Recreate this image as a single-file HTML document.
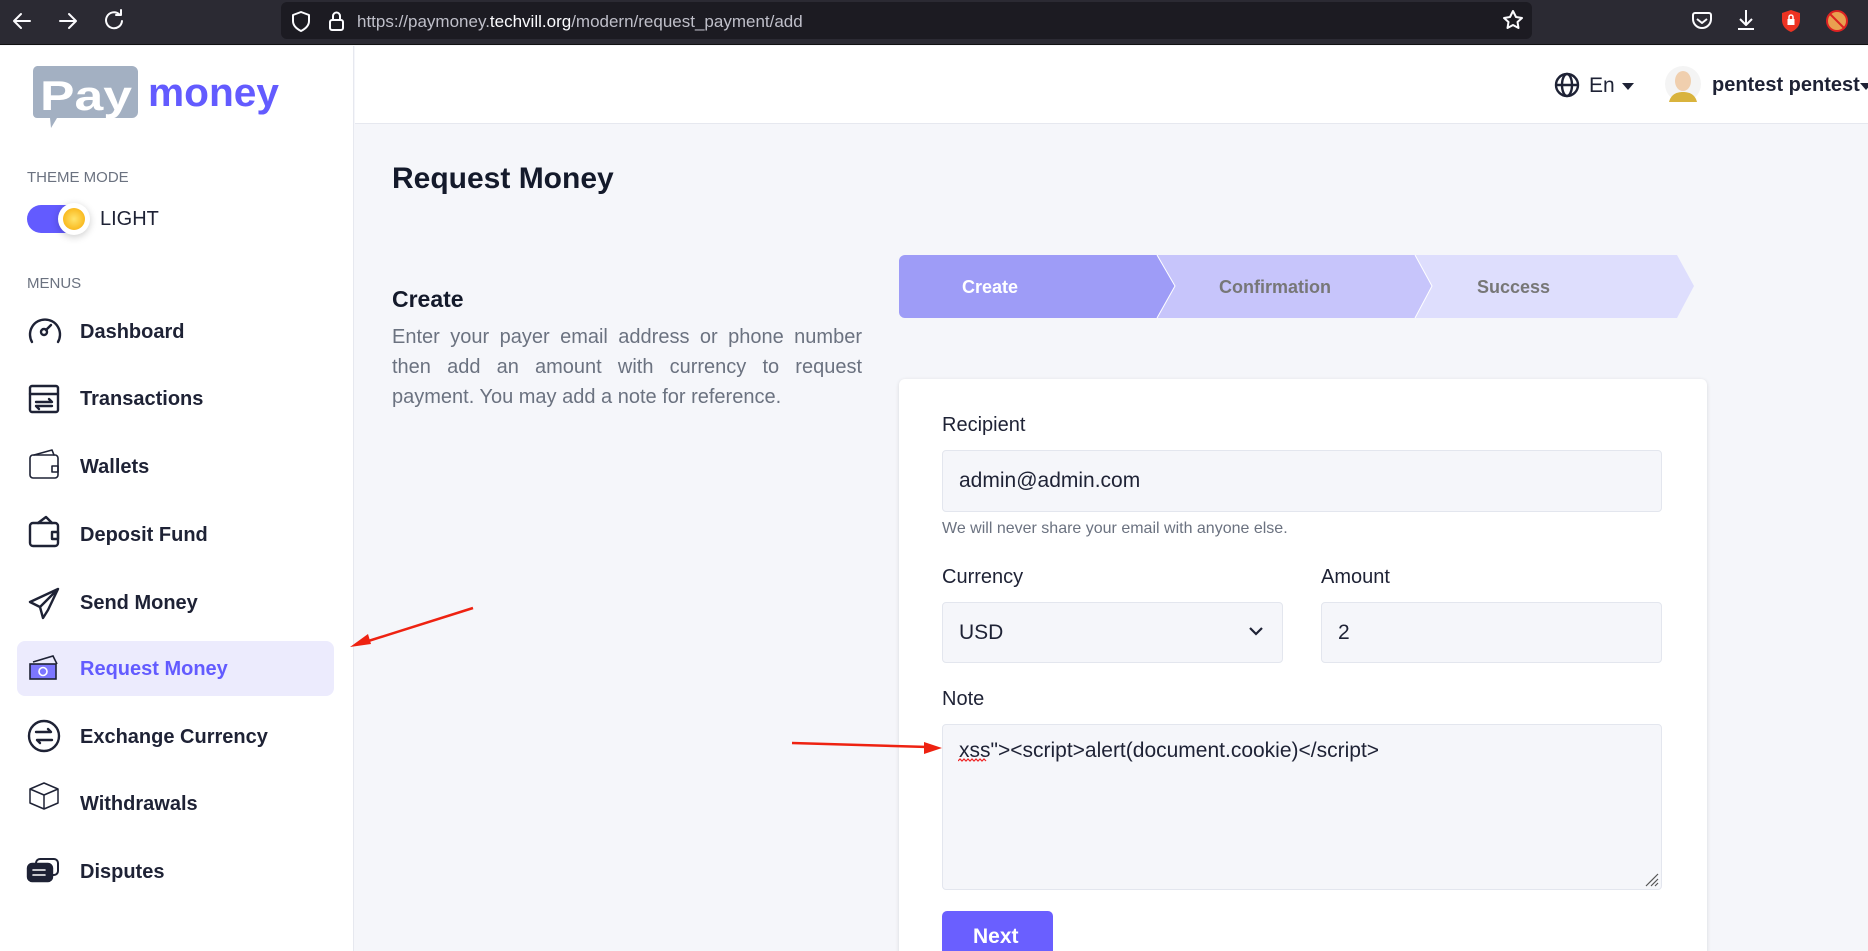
<!DOCTYPE html>
<html style="overflow:hidden;height:951px"><head><meta charset="utf-8"><style>
*{box-sizing:border-box;margin:0;padding:0}
body{width:1868px;height:951px;overflow:hidden;background:#f5f6fa;font-family:"Liberation Sans",sans-serif;position:relative;color:#1c1c2e}
.abs{position:absolute}
#bar{left:0;top:0;width:1868px;height:45px;background:#2b2a33;border-bottom:1px solid #111}
#url{left:281px;top:2px;width:1251px;height:37px;background:#1c1b22;border-radius:6px}
#side{left:0;top:46px;width:354px;height:905px;background:#fff;border-right:1px solid #e6e8ef}
#head{left:355px;top:46px;width:1513px;height:78px;background:#fff;border-bottom:1px solid #e6e8ef}
.mi{position:absolute;left:80px;font-size:20px;font-weight:bold;color:#1e2235}
.lbl{position:absolute;font-size:20px;color:#1e2235}
.inp{position:absolute;background:#f5f6fa;border:1px solid #e3e6ee;border-radius:4px;font-size:21px;color:#1e2235;padding-left:16px;display:flex;align-items:center}
</style></head><body>
<div id="bar" class="abs"></div>
<svg class="abs" style="left:0;top:0" width="1868" height="45" fill="none" stroke="#fbfbfe" stroke-width="2" stroke-linecap="round" stroke-linejoin="round">
<path d="M14 21h16M14 21l7-7M14 21l7 7"/>
<path d="M60 21h16M76 21l-7-7M76 21l-7 7"/>
<path d="M119 14a8 8 0 1 0 3 7M121 10v5h-5"/>
</svg>
<div id="url" class="abs"></div>
<svg class="abs" style="left:0;top:0" width="1868" height="45" fill="none" stroke="#fbfbfe" stroke-width="2" stroke-linejoin="round">
<path d="M301 12l8 3v6c0 5-4 8-8 10-4-2-8-5-8-10v-6z"/>
<rect x="330" y="20" width="13" height="10" rx="2"/><path d="M333 20v-4a3.5 3.5 0 0 1 7 0v4"/>
<path d="M1513 11l3 6 6 1-4.5 4 1 6-5.5-3-5.5 3 1-6-4.5-4 6-1z"/>
<path d="M1695 13h14a2 2 0 0 1 2 2v4a9 9 0 0 1-18 0v-4a2 2 0 0 1 2-2zM1697 19l5 4 5-4"/>
<path d="M1746 10v14M1740 19l6 6 6-6M1738 29h16"/>
</svg>
<svg class="abs" style="left:1779px;top:9px" width="24" height="24"><path d="M12 1l9 3v7c0 6-4 10-9 12-5-2-9-6-9-12V4z" fill="#e32"/><rect x="8.5" y="10" width="7" height="6" fill="#fff"/><path d="M10 10V8a2 2 0 0 1 4 0v2" stroke="#fff" fill="none" stroke-width="1.5"/></svg>
<svg class="abs" style="left:1825px;top:9px" width="24" height="24"><circle cx="12" cy="12" r="10" fill="#e9a050" stroke="#d22" stroke-width="2"/><path d="M5 5l14 14" stroke="#d22" stroke-width="2"/></svg>
<div class="abs" style="left:357px;top:12px;font-size:17px;color:#bfbfc9">https://paymoney.<span style="color:#fbfbfe">techvill.org</span>/modern/request_payment/add</div>

<div id="side" class="abs"></div>
<div id="head" class="abs"></div>
<!-- logo -->
<svg class="abs" style="left:31px;top:64px" width="252" height="64">
<path d="M6 2h95a6 6 0 0 1 6 6v40a6 6 0 0 1-6 6H26l-6 10-1-10H6a4 4 0 0 1-4-4V7a5 5 0 0 1 4-5z" fill="#a3b0c2"/>
<text x="9" y="46" font-family="Liberation Sans" font-weight="bold" font-size="42" fill="#fff" textLength="92" lengthAdjust="spacingAndGlyphs">Pay</text>
<text x="117" y="42" font-family="Liberation Sans" font-weight="bold" font-size="40" fill="#635bff" textLength="131" lengthAdjust="spacingAndGlyphs">money</text>
</svg>
<div class="abs" style="left:27px;top:169px;font-size:15px;color:#6b7280">THEME MODE</div>
<div class="abs" style="left:27px;top:205px;width:60px;height:28px;border-radius:14px;background:#635bff"></div>
<div class="abs" style="left:58px;top:203px;width:32px;height:32px;border-radius:50%;background:#fff;box-shadow:0 2px 8px rgba(0,0,0,.2)"></div>
<div class="abs" style="left:63px;top:208px;width:22px;height:22px;border-radius:50%;background:radial-gradient(#ffe46b,#f7a800)"></div>
<div class="abs" style="left:100px;top:208px;font-size:20px;color:#1e2235">LIGHT</div>
<div class="abs" style="left:27px;top:275px;font-size:15px;color:#6b7280">MENUS</div>
<div class="abs" style="left:17px;top:641px;width:317px;height:55px;border-radius:8px;background:#ecebfd"></div>
<svg class="abs" style="left:0;top:0" width="80" height="951" fill="none" stroke="#1e2235" stroke-width="2.4" stroke-linecap="round" stroke-linejoin="round">
<path d="M32 342a15 15 0 1 1 26 0"/><circle cx="44" cy="332" r="3"/><path d="M46 330l5-5"/>
<rect x="30" y="386" width="28" height="26" rx="2"/><path d="M30 394h28M36 402h16l-3-3M52 406H36l3 3"/>
<rect x="30" y="455" width="28" height="23" rx="3" stroke-width="1.6"/><path d="M34 455l18-5 2 5M52 466h6v6h-6z" stroke-width="1.6"/>
<rect x="30" y="523" width="28" height="23" rx="3"/><path d="M38 523l8-6 6 6M52 532h6v7h-6z"/>
<path d="M58 589L30 602l10 5 3 11 5-8 10-21zM40 607l18-18"/>
<circle cx="44" cy="736" r="15"/><path d="M36 732h15l-3-3M52 740H37l3 3"/>
<path d="M30 789l14-6 14 6v14l-14 6-14-6zM30 789l14 6 14-6M44 795v14" stroke-width="1.5"/>
<rect x="36" y="859" width="22" height="16" rx="4" stroke-width="2"/><rect x="28" y="864" width="24" height="17" rx="4" fill="#1e2235"/><path d="M33 870h12M33 875h12" stroke="#fff" stroke-width="1.6"/>
</svg>
<svg class="abs" style="left:27px;top:652px" width="34" height="34" fill="none" stroke="#1e2235" stroke-width="1.6"><path d="M6 10l20-6 4 8"/><rect x="3" y="12" width="26" height="15" fill="#7c76ff" stroke="#1e2235"/><circle cx="16" cy="19.5" r="4" stroke="#fff"/></svg>
<div class="mi" style="top:321px">Dashboard</div>
<div class="mi" style="top:388px">Transactions</div>
<div class="mi" style="top:456px">Wallets</div>
<div class="mi" style="top:524px">Deposit Fund</div>
<div class="mi" style="top:592px">Send Money</div>
<div class="mi" style="top:658px;color:#635bff">Request Money</div>
<div class="mi" style="top:726px">Exchange Currency</div>
<div class="mi" style="top:793px">Withdrawals</div>
<div class="mi" style="top:861px">Disputes</div>

<!-- header right -->
<svg class="abs" style="left:1554px;top:72px" width="26" height="26" fill="none" stroke="#1e2235" stroke-width="2.4"><circle cx="13" cy="13" r="11"/><ellipse cx="13" cy="13" rx="5" ry="11"/><path d="M2 13h22"/></svg>
<div class="abs" style="left:1589px;top:74px;font-size:21px;color:#1e2235">En</div>
<div class="abs" style="left:1622px;top:83px;border:6px solid transparent;border-top:7px solid #1e2235"></div>
<svg class="abs" style="left:1665px;top:66px" width="36" height="38"><circle cx="18" cy="18" r="18" fill="#f4f4f4"/><ellipse cx="18" cy="15" rx="8" ry="10" fill="#f0cfae"/><path d="M4 36c2-8 8-10 14-10s12 2 14 10z" fill="#d9b33c"/></svg>
<div class="abs" style="left:1712px;top:74px;font-size:20px;font-weight:bold;color:#1e2235">pentest pentest</div>
<div class="abs" style="left:1860px;top:83px;border:6px solid transparent;border-top:7px solid #1e2235"></div>

<!-- main -->
<div class="abs" style="left:392px;top:162px;font-size:30px;font-weight:bold;color:#141a2b">Request Money</div>
<div class="abs" style="left:392px;top:286px;font-size:23px;font-weight:bold;color:#141a2b">Create</div>
<div class="abs" style="left:392px;top:322px;width:470px;font-size:20px;line-height:30px;color:#6b7280;text-align:justify">Enter your payer email address or phone number then add an amount with currency to request payment. You may add a note for reference.</div>

<svg class="abs" style="left:899px;top:255px" width="800" height="64">
<path d="M6 0h252l18 31-18 32H6a6 6 0 0 1-6-6V6a6 6 0 0 1 6-6z" fill="#9e9cf7"/>
<path d="M258 0h258l17 31-17 32H258l18-32z" fill="#c7c5fb"/>
<path d="M516 0h262l17 31-17 32H516l17-32z" fill="#dedefd"/>
<path d="M258 0l18 31-18 32M516 0l17 31-17 32" stroke="#fff" fill="none"/>
<text x="63" y="38" font-family="Liberation Sans" font-weight="bold" font-size="18" fill="#fff">Create</text>
<text x="320" y="38" font-family="Liberation Sans" font-weight="bold" font-size="18" fill="#777">Confirmation</text>
<text x="578" y="38" font-family="Liberation Sans" font-weight="bold" font-size="18" fill="#777">Success</text>
</svg>

<div class="abs" style="left:899px;top:379px;width:808px;height:580px;background:#fff;border-radius:6px;box-shadow:0 1px 4px rgba(0,0,0,.12)"></div>
<div class="lbl" style="left:942px;top:414px">Recipient</div>
<div class="inp" style="left:942px;top:450px;width:720px;height:62px">admin@admin.com</div>
<div class="abs" style="left:942px;top:520px;font-size:16px;color:#6b7280">We will never share your email with anyone else.</div>
<div class="lbl" style="left:942px;top:566px">Currency</div>
<div class="lbl" style="left:1321px;top:566px">Amount</div>
<div class="inp" style="left:942px;top:602px;width:341px;height:61px">USD</div>
<svg class="abs" style="left:1248px;top:625px" width="16" height="12" fill="none" stroke="#1e2235" stroke-width="2.2"><path d="M2 3l6 6 6-6"/></svg>
<div class="inp" style="left:1321px;top:602px;width:341px;height:61px">2</div>
<div class="lbl" style="left:942px;top:688px">Note</div>
<div class="inp" style="left:942px;top:724px;width:720px;height:166px;align-items:flex-start;padding-top:14px">xss"&gt;&lt;script&gt;alert(document.cookie)&lt;/script&gt;</div>
<svg class="abs" style="left:958px;top:758px" width="32" height="6" fill="none" stroke="#e22" stroke-width="1.2"><path d="M0 3l2-2 2 2 2-2 2 2 2-2 2 2 2-2 2 2 2-2 2 2 2-2 2 2 2-2 2 2"/></svg>
<svg class="abs" style="left:1644px;top:872px" width="16" height="16" stroke="#555" stroke-width="1.2"><path d="M2 14L14 2M7 14l7-7M11 14l3-3"/></svg>
<div class="abs" style="left:942px;top:911px;width:111px;height:40px;background:#6a5fff;border-radius:5px 5px 0 0;color:#fff;font-size:21px;font-weight:bold;padding:14px 0 0 31px">Next</div>

<!-- red arrows -->
<svg class="abs" style="left:0;top:0" width="1868" height="951">
<path d="M473 608L362 643" stroke="#e21" stroke-width="2.5"/><path d="M350 647l18-13 3 10z" fill="#e21"/>
<path d="M792 743L928 747" stroke="#e21" stroke-width="2.5"/><path d="M942 748l-18 6v-12z" fill="#e21"/>
</svg>
</body></html>
